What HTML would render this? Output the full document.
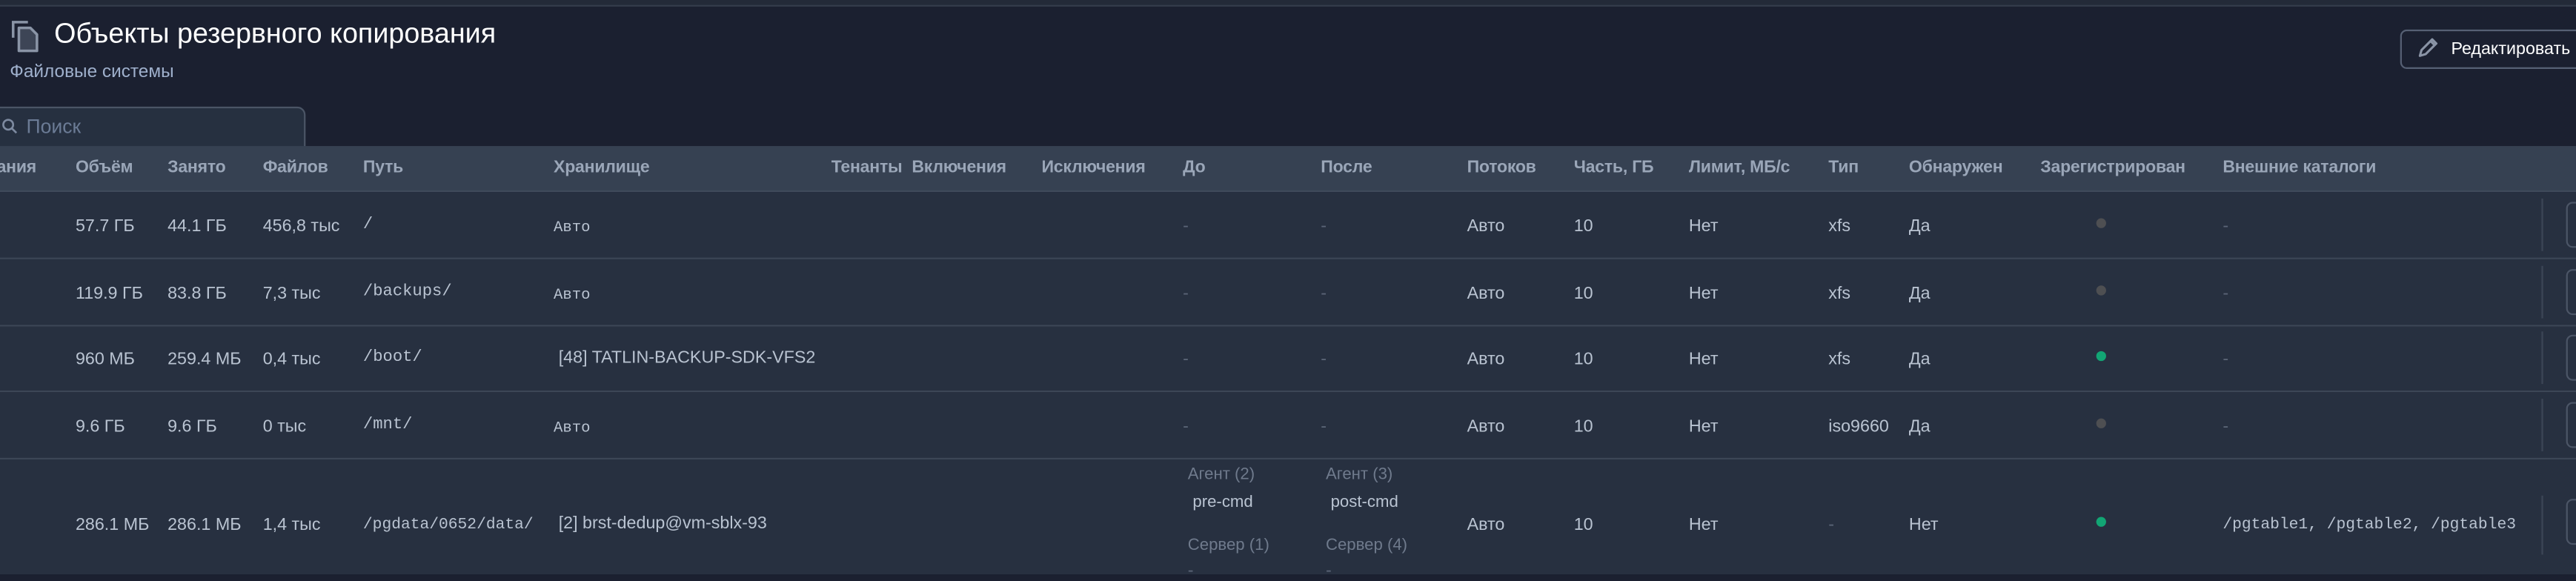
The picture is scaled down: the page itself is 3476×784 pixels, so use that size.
<!DOCTYPE html>
<html><head><meta charset="utf-8">
<style>
html,body{margin:0;padding:0;background:#1b2030;overflow:hidden;width:3476px;height:775px}
#w{position:absolute;left:0;top:0;width:1568px;height:350px;transform:scale(2.2168,2.2143);transform-origin:0 0;font-family:"Liberation Sans",sans-serif;color:#b9c3d1;font-size:10.5px}
.a{position:absolute;white-space:nowrap}
.m{font-family:"Liberation Mono",monospace;font-size:10px}
.hd{position:absolute;left:0;top:89px;width:1568px;height:27px;background:#364152;border-bottom:1px solid #3f4a5b}
.hd span{position:absolute;top:8px;font-weight:bold;color:#9aa6b8;font-size:10.4px;white-space:nowrap;letter-spacing:-0.1px}
.row{position:absolute;left:0;width:1568px;background:#273040;border-bottom:1px solid #3c4656}
.dash{color:#5b6577}
.dot{position:absolute;width:6px;height:6px;border-radius:50%}
.vd{position:absolute;left:1547px;width:1px;background:#3c4656}
.bt{position:absolute;left:1562px;width:20px;height:26px;border:1px solid #4b5566;border-radius:4px}
.r1,.r2,.r3,.r4,.r5{}
</style></head><body><div id="w">
<div class="a" style="left:0;top:0;width:1568px;height:3px;background:#232a38;border-bottom:1px solid #343c4b"></div>
<svg class="a" style="left:6px;top:11px" width="20" height="21" viewBox="0 0 20 21">
<path d="M2 12V2.5h9" fill="none" stroke="#8a94a6" stroke-width="1.6"/>
<path d="M5.5 6h7l4 4v10h-11z" fill="#3d4556" stroke="#8a94a6" stroke-width="1.6" stroke-linejoin="round"/>
</svg>
<div class="a" style="left:33px;top:11px;font-size:17px;color:#fff">Объекты резервного копирования</div>
<div class="a" style="left:6px;top:38px;font-size:11px;color:#9fb0cc">Файловые системы</div>
<div class="a" style="left:-6px;top:65px;width:190px;height:24px;background:#263040;border:1px solid #4b5566;border-radius:0 5px 0 0"></div>
<svg class="a" style="left:1px;top:72px" width="10" height="10" viewBox="0 0 10 10"><circle cx="4" cy="4" r="3" fill="none" stroke="#7d8aa0" stroke-width="1.2"/><path d="M6.2 6.2L9 9" stroke="#7d8aa0" stroke-width="1.2"/></svg>
<div class="a" style="left:16px;top:70px;font-size:12px;color:#6b7b95">Поиск</div>
<div class="a" style="left:1461px;top:18px;width:120px;height:22px;border:1px solid #566074;border-radius:4px"></div>
<svg class="a" style="left:1471px;top:23px" width="13" height="13" viewBox="0 0 13 13"><path d="M2 11l1-3.5 6.5-6.5 2.5 2.5L5.5 10z" fill="none" stroke="#8a94a6" stroke-width="1.4" stroke-linejoin="round"/><path d="M8.5 2l2.5 2.5" stroke="#8a94a6" stroke-width="1.4"/></svg>
<div class="a" style="left:1492px;top:24px;font-size:10.5px;color:#fff">Редактировать</div>

<div class="hd">
<span style="left:-2px">ания</span><span style="left:46px">Объём</span><span style="left:102px">Занято</span><span style="left:160px">Файлов</span><span style="left:221px">Путь</span><span style="left:337px">Хранилище</span><span style="left:506px">Тенанты</span><span style="left:555px">Включения</span><span style="left:634px">Исключения</span><span style="left:720px">До</span><span style="left:804px">После</span><span style="left:893px">Потоков</span><span style="left:958px">Часть, ГБ</span><span style="left:1028px">Лимит, МБ/с</span><span style="left:1113px">Тип</span><span style="left:1162px">Обнаружен</span><span style="left:1242px">Зарегистрирован</span><span style="left:1353px">Внешние каталоги</span>
</div>

<div class="row" style="top:117px;height:40px"></div>
<div class="row" style="top:158px;height:40px"></div>
<div class="row" style="top:199px;height:39px"></div>
<div class="row" style="top:239px;height:40px"></div>
<div class="row" style="top:280px;height:70px;border:none"></div>

<!-- row1 -->
<div class="a" style="left:46px;top:132px">57.7 ГБ</div><div class="a" style="left:102px;top:132px">44.1 ГБ</div><div class="a" style="left:160px;top:132px">456,8 тыс</div><div class="a m" style="left:221px;top:132px">/</div><div class="a m" style="left:337px;top:133px;font-size:9.3px">Авто</div>
<div class="a dash" style="left:720px;top:132px">-</div><div class="a dash" style="left:804px;top:132px">-</div><div class="a" style="left:893px;top:132px">Авто</div><div class="a" style="left:958px;top:132px">10</div><div class="a" style="left:1028px;top:132px">Нет</div><div class="a" style="left:1113px;top:132px">xfs</div><div class="a" style="left:1162px;top:132px">Да</div><div class="dot" style="left:1276px;top:133px;background:#4e4f52"></div><div class="a dash" style="left:1353px;top:132px">-</div>
<div class="vd" style="top:121px;height:32px"></div><div class="bt" style="top:123px"></div>
<!-- row2 -->
<div class="a" style="left:46px;top:173px">119.9 ГБ</div><div class="a" style="left:102px;top:173px">83.8 ГБ</div><div class="a" style="left:160px;top:173px">7,3 тыс</div><div class="a m" style="left:221px;top:173px">/backups/</div><div class="a m" style="left:337px;top:174px;font-size:9.3px">Авто</div>
<div class="a dash" style="left:720px;top:173px">-</div><div class="a dash" style="left:804px;top:173px">-</div><div class="a" style="left:893px;top:173px">Авто</div><div class="a" style="left:958px;top:173px">10</div><div class="a" style="left:1028px;top:173px">Нет</div><div class="a" style="left:1113px;top:173px">xfs</div><div class="a" style="left:1162px;top:173px">Да</div><div class="dot" style="left:1276px;top:174px;background:#4e4f52"></div><div class="a dash" style="left:1353px;top:173px">-</div>
<div class="vd" style="top:162px;height:32px"></div><div class="bt" style="top:164px"></div>
<!-- row3 -->
<div class="a" style="left:46px;top:213px">960 МБ</div><div class="a" style="left:102px;top:213px">259.4 МБ</div><div class="a" style="left:160px;top:213px">0,4 тыс</div><div class="a m" style="left:221px;top:213px">/boot/</div><div class="a" style="left:340px;top:212px">[48] TATLIN-BACKUP-SDK-VFS2</div>
<div class="a dash" style="left:720px;top:213px">-</div><div class="a dash" style="left:804px;top:213px">-</div><div class="a" style="left:893px;top:213px">Авто</div><div class="a" style="left:958px;top:213px">10</div><div class="a" style="left:1028px;top:213px">Нет</div><div class="a" style="left:1113px;top:213px">xfs</div><div class="a" style="left:1162px;top:213px">Да</div><div class="dot" style="left:1276px;top:214px;background:#12a574"></div><div class="a dash" style="left:1353px;top:213px">-</div>
<div class="vd" style="top:202px;height:32px"></div><div class="bt" style="top:204px"></div>
<!-- row4 -->
<div class="a" style="left:46px;top:254px">9.6 ГБ</div><div class="a" style="left:102px;top:254px">9.6 ГБ</div><div class="a" style="left:160px;top:254px">0 тыс</div><div class="a m" style="left:221px;top:254px">/mnt/</div><div class="a m" style="left:337px;top:255px;font-size:9.3px">Авто</div>
<div class="a dash" style="left:720px;top:254px">-</div><div class="a dash" style="left:804px;top:254px">-</div><div class="a" style="left:893px;top:254px">Авто</div><div class="a" style="left:958px;top:254px">10</div><div class="a" style="left:1028px;top:254px">Нет</div><div class="a" style="left:1113px;top:254px">iso9660</div><div class="a" style="left:1162px;top:254px">Да</div><div class="dot" style="left:1276px;top:255px;background:#4e4f52"></div><div class="a dash" style="left:1353px;top:254px">-</div>
<div class="vd" style="top:243px;height:32px"></div><div class="bt" style="top:245px"></div>
<!-- row5 -->
<div class="a" style="left:46px;top:314px">286.1 МБ</div><div class="a" style="left:102px;top:314px">286.1 МБ</div><div class="a" style="left:160px;top:314px">1,4 тыс</div><div class="a m" style="left:221px;top:314px;font-size:9.6px">/pgdata/0652/data/</div><div class="a" style="left:340px;top:313px">[2] brst-dedup@vm-sblx-93</div>
<div class="a" style="left:723px;top:284px;color:#6f7a8c;font-size:10px">Агент (2)</div><div class="a" style="left:726px;top:301px;font-size:10px">pre-cmd</div><div class="a" style="left:723px;top:327px;color:#6f7a8c;font-size:10px">Сервер (1)</div><div class="a dash" style="left:723px;top:342px">-</div>
<div class="a" style="left:807px;top:284px;color:#6f7a8c;font-size:10px">Агент (3)</div><div class="a" style="left:810px;top:301px;font-size:10px">post-cmd</div><div class="a" style="left:807px;top:327px;color:#6f7a8c;font-size:10px">Сервер (4)</div><div class="a dash" style="left:807px;top:342px">-</div>
<div class="a" style="left:893px;top:314px">Авто</div><div class="a" style="left:958px;top:314px">10</div><div class="a" style="left:1028px;top:314px">Нет</div><div class="a dash" style="left:1113px;top:314px">-</div><div class="a" style="left:1162px;top:314px">Нет</div><div class="dot" style="left:1276px;top:315px;background:#12a574"></div><div class="a m" style="left:1353px;top:314px;font-size:9.6px">/pgtable1, /pgtable2, /pgtable3</div>
<div class="vd" style="top:302px;height:36px"></div><div class="bt" style="top:304px"></div>
</div></body></html>
